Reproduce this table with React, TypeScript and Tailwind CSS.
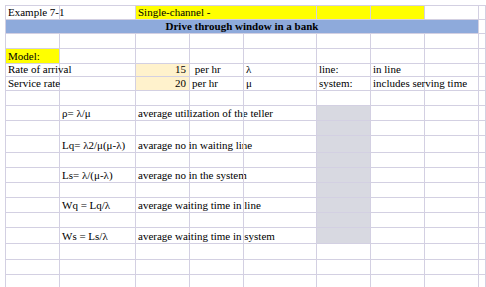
import React from 'react';

type CellProps = {
  span?: number;
  bg?: string;
  align?: 'left' | 'right' | 'center';
  bold?: boolean;
  children?: React.ReactNode;
};

const spanClass: Record<number, string> = {
  1: 'col-span-1',
  2: 'col-span-2',
  3: 'col-span-3',
  8: 'col-span-8',
};

function Cell({ span = 1, bg = '', align = 'left', bold = false, children }: CellProps) {
  const justify =
    align === 'right' ? 'justify-end pr-[3px]' : align === 'center' ? 'justify-center' : 'justify-start pl-[2px]';
  return (
    <div
      className={`${spanClass[span]} ${bg} ${justify} flex items-end border-r border-b border-[#d3d0e2] overflow-visible whitespace-pre leading-[13px] ${bold ? 'font-bold' : ''}`}
    >
      {children}
    </div>
  );
}

function Empty({ n }: { n: number }) {
  return (
    <>
      {Array.from({ length: n }).map((_, i) => (
        <Cell key={i} />
      ))}
    </>
  );
}

// one formula row: label in B, description in C (spills over D/E), grey result in F
function FormulaRow({ label, desc }: { label: string; desc: string }) {
  return (
    <>
      <Cell />
      <Cell>{label}</Cell>
      <Cell>{desc}</Cell>
      <Cell />
      <Cell />
      <Cell bg="bg-[#d8d9e1]" />
      <Cell />
      <Cell />
      <Cell />
    </>
  );
}

function SpacerRow({ grey = false }: { grey?: boolean }) {
  return (
    <>
      <Empty n={5} />
      <Cell bg={grey ? 'bg-[#d8d9e1]' : ''} />
      <Empty n={3} />
    </>
  );
}

export default function App() {
  return (
    <div className="w-[486px] h-[287px] overflow-hidden bg-white text-[11px] text-black font-['Liberation_Serif','Times_New_Roman',serif]">
      <div className="ml-[5px] mt-[5px] grid grid-cols-[54px_76px_54px_54px_73px_54px_54px_54px_1fr] grid-rows-[14px_14px_15px_15px_13px_14px_15px_15px_15px_17px_15px_15px_15px_15px_15px_16px_16px_15px_15px] border-l border-t border-[#d3d0e2]">
        {/* row 1 */}
        <Cell>Example 7-1</Cell>
        <Cell />
        <Cell span={3} bg="bg-[#ffff00]">Single-channel -</Cell>
        <Cell bg="bg-[#ffff00]" />
        <Cell bg="bg-[#ffff00]" />
        <Cell />
        <Cell />

        {/* row 2 */}
        <Cell span={8} bg="bg-[#8eaadb]" align="center" bold>
          Drive through window in a bank
        </Cell>
        <Cell />

        {/* row 3 */}
        <Empty n={9} />

        {/* row 4 */}
        <Cell bg="bg-[#ffff00]">Model:</Cell>
        <Empty n={8} />

        {/* row 5 */}
        <Cell>Rate of arrival</Cell>
        <Cell />
        <Cell bg="bg-[#fff2cc]" align="right">15</Cell>
        <Cell> per hr</Cell>
        <Cell>λ</Cell>
        <Cell>line:</Cell>
        <Cell>in line</Cell>
        <Cell />
        <Cell />

        {/* row 6 */}
        <Cell>Service rate</Cell>
        <Cell />
        <Cell bg="bg-[#fff2cc]" align="right">20</Cell>
        <Cell>per hr</Cell>
        <Cell>μ</Cell>
        <Cell>system:</Cell>
        <Cell>includes serving time</Cell>
        <Cell />
        <Cell />

        <SpacerRow />
        <FormulaRow label="ρ= λ/μ" desc="average utilization of the teller" />
        <SpacerRow grey />
        <FormulaRow label="Lq= λ2/μ(μ-λ)" desc="avarage no in waiting line" />
        <SpacerRow grey />
        <FormulaRow label="Ls= λ/(μ-λ)" desc="average no in the system" />
        <SpacerRow grey />
        <FormulaRow label="Wq = Lq/λ" desc="average waiting time in line" />
        <SpacerRow grey />
        <FormulaRow label="Ws = Ls/λ" desc="average waiting time in system" />
        <SpacerRow />
        <SpacerRow />
        <SpacerRow />
      </div>
    </div>
  );
}
